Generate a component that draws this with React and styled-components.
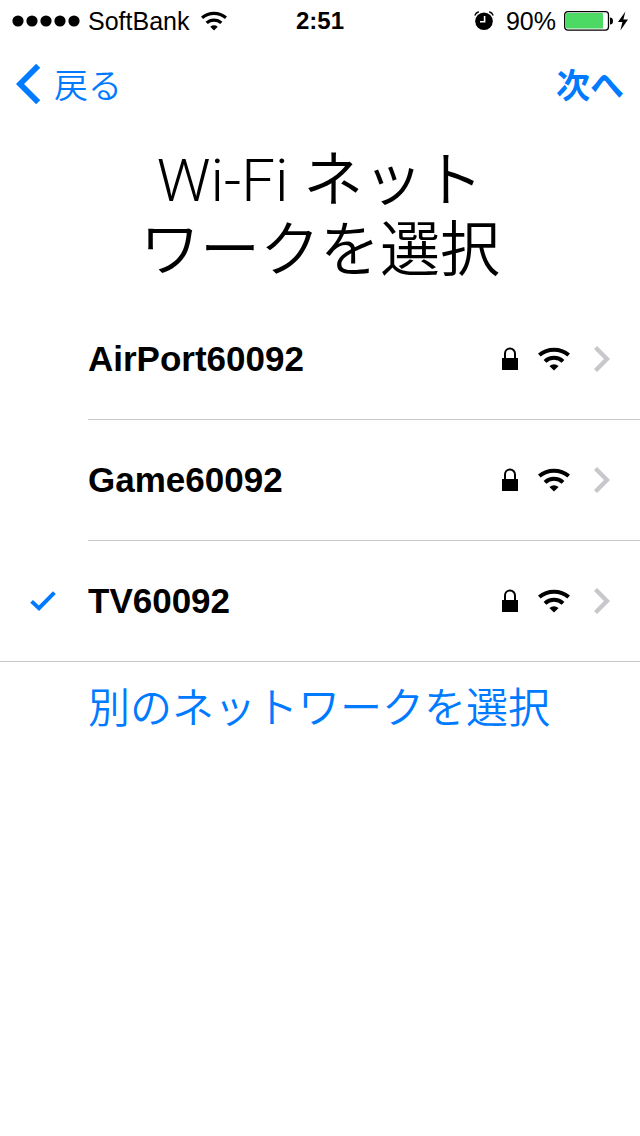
import React from "react";
import styled, { createGlobalStyle } from "styled-components";

const networks = [
  { name: "AirPort60092", selected: false },
  { name: "Game60092", selected: false },
  { name: "TV60092", selected: true },
];

const WifiIcon = ({ width, height }) => (
  <svg width={width} height={height} viewBox="0 0 32 24" aria-hidden="true">
    <g fill="none" stroke="#000" strokeWidth="4">
      <path d="M1.3 8 A23 23 0 0 1 30.7 8" />
      <path d="M7 14.4 A13 13 0 0 1 25 14.4" />
    </g>
    <path d="M11.4 19 A7.4 7.4 0 0 1 20.6 19 L16 23.6 Z" />
  </svg>
);

const LockIcon = () => (
  <svg width="16" height="24" viewBox="0 0 16 24" aria-hidden="true">
    <path d="M3 12 V6.5 a5 5 0 0 1 10 0 V12" fill="none" stroke="#000" strokeWidth="2" />
    <rect y="11" width="16" height="12" />
  </svg>
);

const ChevronIcon = () => (
  <svg width="16" height="26" viewBox="0 0 16 26" aria-hidden="true">
    <path d="M1.5 1.5 L13 13 L1.5 24.5" fill="none" stroke="#c7c7cc" strokeWidth="4.4" />
  </svg>
);

const CheckIcon = () => (
  <svg width="26" height="22" viewBox="0 0 26 22" aria-hidden="true">
    <path d="M1.6 11.4 L9 18.2 L24.4 2.6" fill="none" stroke="#007aff" strokeWidth="4" />
  </svg>
);

const BackIcon = () => (
  <svg width="24" height="40" viewBox="0 0 24 40" aria-hidden="true">
    <path d="M22.2 1.8 L4 20 L22.2 38.2" fill="none" stroke="#007aff" strokeWidth="5.8" />
  </svg>
);

const SignalDots = () => (
  <svg width="68" height="12" viewBox="0 0 68 12" role="img" aria-label="signal">
    {[6, 20, 34, 48, 62].map((x) => (
      <circle key={x} cx={x} cy="6" r="5.6" />
    ))}
  </svg>
);

const AlarmIcon = () => (
  <svg width="20" height="20" viewBox="0 0 20 20" aria-hidden="true">
    <circle cx="10" cy="10.2" r="8.8" />
    <path d="M10.6 5 V10.8 H6" fill="none" stroke="#fff" strokeWidth="1.6" />
    <path d="M0.8 4.4 Q1.8 1.6 4.8 0.8 M19.2 4.4 Q18.2 1.6 15.2 0.8" fill="none" stroke="#000" strokeWidth="1.4" />
  </svg>
);

const BatteryIcon = () => (
  <svg width="50" height="20" viewBox="0 0 50 20" role="img" aria-label="battery">
    <rect x="0.7" y="0.7" width="43.8" height="18.4" rx="3" fill="#fff" stroke="#000" strokeWidth="1.3" />
    <rect x="2" y="2" width="37" height="15.6" rx="1" fill="#4cd964" />
    <path d="M46 6.5 Q49 6.5 49 10 Q49 13.5 46 13.5 Z" />
  </svg>
);

const BoltIcon = () => (
  <svg width="10" height="20" viewBox="0 0 10 20" aria-hidden="true">
    <path d="M7.4 0.6 L0 11 H4.4 L2.4 19.4 L10 8.4 H5.4 Z" />
  </svg>
);

const App = () => {
  return (
    <>
      <GlobalStyle />
      <StatusBar>
        <StatusGroup>
          <SignalDots />
          <StatusLabel>SoftBank</StatusLabel>
          <WifiIcon width={26} height={20} />
        </StatusGroup>
        <Clock>2:51</Clock>
        <StatusGroup $end>
          <AlarmIcon />
          <StatusLabel $end>90%</StatusLabel>
          <Battery>
            <BatteryIcon />
            <BoltIcon />
          </Battery>
        </StatusGroup>
      </StatusBar>

      <NavBar>
        <NavButton type="button">
          <BackIcon />
          戻る
        </NavButton>
        <NavButton type="button" $strong>次へ</NavButton>
      </NavBar>

      <main>
        <Title>
          <Latin>Wi-Fi</Latin> ネット
          <br />
          ワークを選択
        </Title>

        <NetworkList>
          {networks.map((network) => (
            <NetworkItem key={network.name}>
              <NetworkButton type="button" aria-pressed={network.selected}>
                <CheckCell>{network.selected && <CheckIcon />}</CheckCell>
                <NetworkInfo>
                  <NetworkName>{network.name}</NetworkName>
                  <NetworkIcons>
                    <LockIcon />
                    <WifiIcon width={32} height={24} />
                    <ChevronIcon />
                  </NetworkIcons>
                </NetworkInfo>
              </NetworkButton>
            </NetworkItem>
          ))}
        </NetworkList>

        <OtherNetwork type="button">別のネットワークを選択</OtherNetwork>
      </main>
    </>
  );
};

const GlobalStyle = createGlobalStyle`
  * {
    box-sizing: border-box;
  }
  body {
    margin: 0;
    background: #fff;
    color: #000;
    font-family: "Liberation Sans", "Noto Sans CJK JP", sans-serif;
  }
  button {
    margin: 0;
    padding: 0;
    border: 0;
    background: none;
    color: inherit;
    font: inherit;
    cursor: pointer;
  }
  svg {
    display: block;
    flex: none;
  }
`;

const StatusBar = styled.header`
  display: grid;
  grid-template-columns: 1fr auto 1fr;
  align-items: center;
  height: 42px;
  padding: 0 12px;
  font-size: 25px;
  line-height: 42px;
`;

const StatusGroup = styled.div`
  display: flex;
  align-items: center;
  justify-content: ${(props) => (props.$end ? "flex-end" : "flex-start")};
  gap: 8px;
`;

const StatusLabel = styled.span`
  padding: ${(props) => (props.$end ? "0 0 0 4px" : "0 4px 0 0")};
`;

const Battery = styled.div`
  display: flex;
  gap: 4px;
`;

const Clock = styled.time`
  font-size: 24px;
  font-weight: 700;
`;

const NavBar = styled.nav`
  display: flex;
  align-items: center;
  justify-content: space-between;
  height: 84px;
  padding: 0 16px;
`;

const NavButton = styled.button`
  display: flex;
  align-items: center;
  gap: 14px;
  color: #007aff;
  font-family: "Noto Sans CJK JP", sans-serif;
  font-size: 34px;
  line-height: 38px;
  font-weight: ${(props) => (props.$strong ? 700 : 350)};
`;

const Title = styled.h1`
  margin: 20px 0 13px;
  font-family: Roboto, "Noto Sans CJK JP", sans-serif;
  font-size: 60px;
  line-height: 70px;
  font-weight: 350;
  text-align: center;
`;

const Latin = styled.span`
  font-weight: 300;
`;

const NetworkList = styled.ul`
  margin: 0;
  padding: 0;
  list-style: none;
`;

const NetworkItem = styled.li`
  &:last-child {
    border-bottom: 1px solid #c8c7cc;
  }
  &:last-child span {
    border-bottom: 0;
  }
`;

const NetworkButton = styled.button`
  display: flex;
  width: 100%;
  text-align: left;
`;

const CheckCell = styled.span`
  display: flex;
  flex: none;
  align-items: center;
  width: 88px;
  height: 120px;
  padding-left: 30px;
`;

const NetworkInfo = styled.span`
  display: flex;
  flex: 1;
  align-items: center;
  justify-content: space-between;
  padding-right: 30px;
  border-bottom: 1px solid #c8c7cc;
`;

const NetworkName = styled.strong`
  font-size: 35px;
  line-height: 120px;
  font-weight: 700;
`;

const NetworkIcons = styled.i`
  display: grid;
  grid-template-columns: 16px 32px 20px;
  align-items: center;
  column-gap: 20px;

  svg:last-child {
    justify-self: end;
  }
`;

const OtherNetwork = styled.button`
  display: block;
  width: 100%;
  padding: 0 88px;
  color: #007aff;
  font-family: "Noto Sans CJK JP", sans-serif;
  font-size: 42px;
  line-height: 86px;
  font-weight: 350;
  text-align: left;
`;

export default App;
